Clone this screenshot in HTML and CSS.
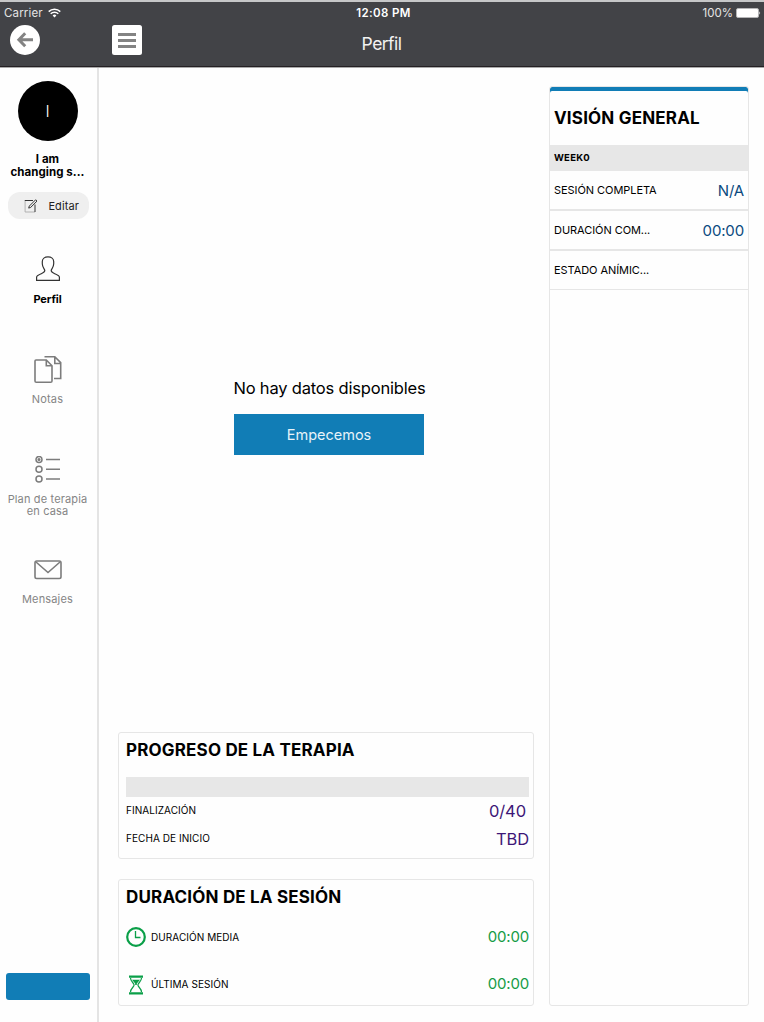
FILE: index.html
```html
<!DOCTYPE html>
<html lang="es">
<head>
<meta charset="utf-8">
<title>Perfil</title>
<link rel="stylesheet" href="styles.css">
</head>
<body>
<div class="app">
  <header class="header">
    <div class="status">
      <div class="carrier"><span>Carrier</span>
        <svg width="13" height="10" viewBox="0 0 13 10" fill="none" stroke="#fff" stroke-width="1.5"><path d="M.7 3.6a8.3 8.3 0 0 1 11.6 0M2.7 5.8a5.4 5.4 0 0 1 7.6 0"/><path d="M4.6 7.4a2.8 2.8 0 0 1 3.8 0L6.5 9.4z" fill="#fff" stroke="none"/></svg>
      </div>
      <div class="time">12:08 PM</div>
      <div class="power"><span>100%</span>
        <svg width="25" height="10" viewBox="0 0 25 10"><rect x=".5" y=".5" width="22" height="9" rx="1.5" fill="#fff" stroke="#b5b5b7"/><path d="M23.4 3.2q1.6 1.8 0 3.6z" fill="#fff"/></svg>
      </div>
    </div>
    <nav class="navbar">
      <div class="nav-buttons">
        <svg width="30" height="30" viewBox="0 0 30 30"><circle cx="15" cy="15" r="15" fill="#fff"/><path d="M23 14.7H9M15.2 8.2L8.9 14.7L15.2 21.2" fill="none" stroke="#838383" stroke-width="3"/></svg>
        <svg width="30" height="30" viewBox="0 0 30 30"><rect width="30" height="30" rx="2.5" fill="#fff"/><path d="M6 9.5h18M6 15.5h18M6 21.5h18" stroke="#838383" stroke-width="3"/></svg>
      </div>
      <h1 class="title">Perfil</h1>
    </nav>
  </header>
  <div class="body">
    <aside class="sidebar">
      <div class="avatar"><span>I</span></div>
      <div class="name">I am<br>changing s...</div>
      <div class="edit">
        <svg width="14" height="14" viewBox="0 0 14 14" fill="none"><path d="M1.1 1.5V13H11" stroke="#aaa" stroke-width=".9"/><path d="M.8 1.5H9M11 13V5.5" stroke="#333"/><path d="M4.7 9.1L5.3 7.1L11.6.8L13 2.1L6.7 8.4z" stroke="#333" stroke-width="1"/></svg>
        <span>Editar</span>
      </div>
      <div class="item active">
        <svg width="28" height="28" viewBox="0 0 28 28" fill="none" stroke="#333" stroke-width="1.2"><path d="M2.6 25.4V22.2C2.6 20.5 5.2 19.6 7.3 18.7C10 17.5 10.8 16.7 10.8 15.5C10.8 13.8 8.3 12.7 8.3 8.8V6.5C8.3 3.9 10.7 1.9 14 1.9S19.7 3.9 19.7 6.5V8.8C19.7 12.7 17.2 13.8 17.2 15.5C17.2 16.7 18 17.5 20.7 18.7C22.8 19.6 25.4 20.5 25.4 22.2V25.4z"/></svg>
        <span>Perfil</span>
      </div>
      <div class="item">
        <svg width="28" height="28" viewBox="0 0 28 28" fill="none" stroke="#7c7c7c" stroke-width="1.6"><path d="M2 4H12.3L18 9.8V25Q18 26.3 16.7 26.3H2.3Q1 26.3 1 25V5Q1 4 2 4zM12.3 4V9.8H18"/><path d="M10.5.8H20.8L26.7 6.7V22.5H20M20.8.8V7.5H26.7"/></svg>
        <span>Notas</span>
      </div>
      <div class="item">
        <svg width="28" height="28" viewBox="0 0 28 28" fill="none" stroke="#7c7c7c" stroke-width="1.5"><circle cx="5" cy="3.5" r="3"/><circle cx="5" cy="3.5" r=".8" fill="#7c7c7c"/><circle cx="5" cy="13.3" r="3"/><circle cx="5" cy="23.1" r="3"/><path d="M12 3.5H26M12 13.3H26M12 23.1H26"/></svg>
        <span>Plan de terapia<br>en casa</span>
      </div>
      <div class="item">
        <svg width="28" height="28" viewBox="0 0 28 28" fill="none" stroke="#7c7c7c" stroke-width="1.6"><rect x="1" y="5" width="26" height="17.5" rx="1.7"/><path d="M2 6L14 16.5L26 6"/></svg>
        <span>Mensajes</span>
      </div>
      <div class="side-action"></div>
    </aside>
    <main class="main">
      <section class="empty">
        <p>No hay datos disponibles</p>
        <div class="start"><span>Empecemos</span></div>
      </section>
      <section class="card progress">
        <h2>PROGRESO DE LA TERAPIA</h2>
        <div class="bar"></div>
        <div class="row"><span class="label">FINALIZACIÓN</span><span class="value inset">0/40</span></div>
        <div class="row"><span class="label">FECHA DE INICIO</span><span class="value">TBD</span></div>
      </section>
      <section class="card duration">
        <h2>DURACIÓN DE LA SESIÓN</h2>
        <div class="row first">
          <svg width="20" height="20" viewBox="0 0 20 20" fill="none" stroke="#0a9f48"><circle cx="10" cy="10" r="8.8" stroke-width="2.2"/><path d="M9.5 4V10.5H14.5" stroke-width="1.3"/></svg>
          <span class="label">DURACIÓN MEDIA</span><span class="value">00:00</span>
        </div>
        <div class="row">
          <svg width="20" height="20" viewBox="0 0 20 20" fill="none"><path d="M3 .5H17V2.8H3zM3 17.3H17V19.6H3z" fill="#0a9f48"/><path d="M4.5 3C4.5 6.5 8.1 8 8.1 10S4.5 13.5 4.5 17M15.5 3C15.5 6.5 11.9 8 11.9 10S15.5 13.5 15.5 17" stroke="#0a9f48" stroke-width="1.2"/><path d="M6 4.8H14L10.8 8.6V10H9.2V8.6z" fill="#0a9f48"/></svg>
          <span class="label">ÚLTIMA SESIÓN</span><span class="value">00:00</span>
        </div>
      </section>
    </main>
    <section class="overview">
      <h2>VISIÓN GENERAL</h2>
      <div class="week">WEEK0</div>
      <div class="orow"><span>SESIÓN COMPLETA</span><b>N/A</b></div>
      <div class="orow"><span>DURACIÓN COM...</span><b>00:00</b></div>
      <div class="orow last"><span>ESTADO ANÍMIC...</span></div>
    </section>
  </div>
</div>
</body>
</html>
```

FILE: styles.css
```css
* { box-sizing: border-box; }
body { margin: 0; font-family: Inter, sans-serif; color: #000; background: #fefefe; }
h1, h2, p { margin: 0; }
svg { display: block; flex: none; }
.app { width: 764px; height: 1022px; display: flex; flex-direction: column; overflow: hidden; }
.header { height: 68px; flex: none; background: #424347; border-top: 2px solid #c6c7c8; border-bottom: 1px solid #aaa; box-shadow: inset 0 -1px #242024; color: #fff; }
.status { height: 22px; display: grid; grid-template-columns: 1fr auto 1fr; align-items: center; padding: 0 3px 0 4px; font-size: 11.5px; line-height: 21px; }
.carrier, .power { display: flex; align-items: center; gap: 5px; color: #e4e4e4; letter-spacing: .15px; }
.power { justify-content: flex-end; gap: 3px; letter-spacing: 0; }
.time { font-weight: 600; letter-spacing: .35px; margin-left: 2px; }
.navbar { height: 43px; display: grid; grid-template-columns: 1fr auto 1fr; padding-left: 10px; }
.nav-buttons { display: flex; gap: 72px; padding-top: 1px; }
.title { font-size: 17.5px; font-weight: 400; line-height: 40px; margin-left: -11px; letter-spacing: -.55px; color: #f2f2f2; }
.body { flex: 1; min-height: 0; display: flex; }
.sidebar { width: 99px; flex: none; border-right: 2px solid #e4e4e4; padding: 13px 2px 22px 0; display: flex; flex-direction: column; align-items: center; }
.avatar { width: 60px; height: 60px; border-radius: 50%; background: #000; color: #fff; display: flex; align-items: center; justify-content: center; font-size: 16px; font-weight: 300; }
.name { margin-top: 12px; font-size: 11.5px; line-height: 13px; font-weight: 700; text-align: center; letter-spacing: .05px; }
.edit { width: 81px; height: 27px; margin: 13px 0 0 2px; border-radius: 12px; background: #efefef; display: flex; align-items: center; justify-content: space-between; padding: 0 10px 0 16px; font-size: 11px; letter-spacing: .1px; color: #222; flex: none; }
.item { height: 100px; flex: none; display: flex; flex-direction: column; align-items: center; font-size: 11px; line-height: 12px; letter-spacing: .15px; text-align: center; color: #858585; }
.item span { margin-top: 9px; white-space: nowrap; }
.item.active { margin-top: 36px; color: #000; font-weight: 700; letter-spacing: -.1px; }
.item svg { margin: 1px 0 0 1px; }
.item.active svg { margin: 0; }
.item.active span { margin-top: 10px; }
.side-action { width: 84px; height: 27px; margin: auto 0 0 1px; background: #117db6; border-radius: 3px; }
.main { width: 451px; padding: 0 16px 16px 19px; display: flex; flex-direction: column; gap: 20px; }
.empty { height: 644px; flex: none; display: flex; flex-direction: column; align-items: center; padding: 308px 0 0 7px; }
.empty p { font-size: 16.5px; line-height: 24px; letter-spacing: -.18px; white-space: nowrap; }
.start { width: 190px; height: 41px; margin: 14px 1px 0 0; background: #117db6; color: #e7f3f9; display: flex; align-items: center; justify-content: center; font-size: 14.5px; }
.card { border: 1px solid #e6e6e6; border-radius: 3px; height: 127px; flex: none; padding: 0 4px 0 7px; }
h2 { font-size: 17px; font-weight: 700; line-height: 34px; letter-spacing: .18px; white-space: nowrap; }
.bar { height: 20px; margin-top: 10px; background: #e7e7e7; }
.row { display: flex; align-items: center; height: 28px; }
.label { font-size: 10px; letter-spacing: .06px; white-space: nowrap; }
.progress .label { margin-top: -2px; }
.value { margin-left: auto; font-size: 16.5px; letter-spacing: -.1px; color: #3d1677; }
.inset { margin-right: 3px; }
.duration .row { height: 20px; gap: 5px; margin-top: 28px; }
.duration .row.first { margin-top: 13px; }
.duration .row:last-child span { margin-top: -2px; }
.duration .value { margin-top: -2px; font-size: 15px; letter-spacing: -.2px; color: #159b45; }
.duration .row:last-child .value { margin-top: -4px; }
.overview { width: 200px; height: 920px; margin: 18px 0 0 -1px; border: 1px solid #e6e6e6; border-radius: 3px; box-shadow: inset 0 4px #117db6; }
.overview h2 { padding: 4px 0 0 4px; line-height: 54px; }
.week { height: 26px; background: #e7e7e7; padding-left: 4px; font-size: 9.5px; line-height: 25px; font-weight: 700; letter-spacing: .25px; }
.orow { height: 40px; display: flex; align-items: center; justify-content: space-between; padding: 0 4px; border-bottom: 2px solid #e6e6e6; font-size: 11px; letter-spacing: -.06px; }
.orow.last { height: 39px; border-bottom-width: 1px; }
.orow b { font-size: 15px; font-weight: 400; letter-spacing: -.15px; color: #0b4a80; }
```
